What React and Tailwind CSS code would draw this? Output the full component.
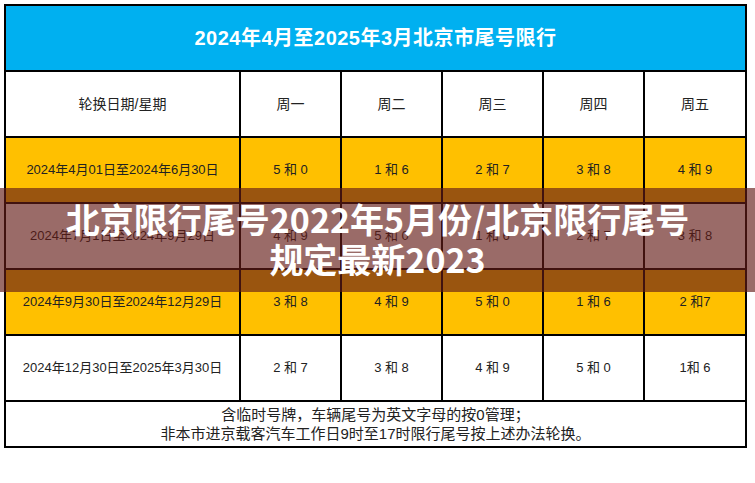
const font = {
  fontFamily: '"Liberation Sans", "Noto Sans CJK SC", sans-serif',
};

const cjk = {
  fontFamily: '"Noto Sans CJK SC", "Noto Sans", sans-serif',
};

const days = ["周一", "周二", "周三", "周四", "周五"];

const rows = [
  { date: "2024年4月01日至2024年6月30日", nums: ["5 和 0", "1 和 6", "2 和 7", "3 和 8", "4 和 9"], yellow: true },
  { date: "2024年7月1日至2024年9月29日", nums: ["4 和 9", "5 和 0", "1 和 6", "2 和 7", "3 和 8"], yellow: false },
  { date: "2024年9月30日至2024年12月29日", nums: ["3 和 8", "4 和 9", "5 和 0", "1 和 6", "2 和7"], yellow: true },
  { date: "2024年12月30日至2025年3月30日", nums: ["2 和 7", "3 和 8", "4 和 9", "5 和 0", "1和 6"], yellow: false },
];

export default function App() {
  return (
    <div className="relative w-[755px] h-[483px] bg-white overflow-hidden" style={font}>
      <div className="pl-[4px] pt-[4px]">
        <table className="border-collapse w-[741px] table-fixed text-[#222]">
          <colgroup>
            <col className="w-[235px]" />
            <col className="w-[101px]" />
            <col className="w-[101px]" />
            <col className="w-[101px]" />
            <col className="w-[101px]" />
            <col className="w-[102px]" />
          </colgroup>
          <tbody>
            <tr className="h-[66px]">
              <td
                colSpan={6}
                className="border-2 border-black bg-[#00b0f0] text-white text-center text-[20px] font-bold tracking-[0.5px]"
              >
                2024年4月至2025年3月北京市尾号限行
              </td>
            </tr>
            <tr className="h-[66px]">
              <td className="border-2 border-black text-center text-[14px]">轮换日期/星期</td>
              {days.map((d) => (
                <td key={d} className="border-2 border-black text-center text-[14px]">
                  {d}
                </td>
              ))}
            </tr>
            {rows.map((r) => (
              <tr key={r.date} className={`h-[66px] ${r.yellow ? "bg-[#ffc000]" : "bg-white"}`}>
                <td className="border-2 border-black text-center text-[13px]">{r.date}</td>
                {r.nums.map((n, i) => (
                  <td key={i} className="border-2 border-black text-center text-[13px]">
                    {n}
                  </td>
                ))}
              </tr>
            ))}
            <tr className="h-[46px]">
              <td colSpan={6} className="border-2 border-black text-center text-[15px] leading-[19px]">
                <div>含临时号牌，车辆尾号为英文字母的按0管理；</div>
                <div>非本市进京载客汽车工作日9时至17时限行尾号按上述办法轮换。</div>
              </td>
            </tr>
          </tbody>
        </table>
      </div>

      <div
        className="absolute left-0 right-0 top-[188px] h-[104px] bg-[rgba(100,28,23,0.65)] flex flex-col items-center justify-center pb-[2px]"
        style={cjk}
      >
        <div className="text-white font-bold text-[34px] leading-[40px] text-center">
          北京限行尾号2022年5月份/北京限行尾号
        </div>
        <div className="text-white font-bold text-[34px] leading-[40px] text-center">规定最新2023</div>
      </div>
    </div>
  );
}
